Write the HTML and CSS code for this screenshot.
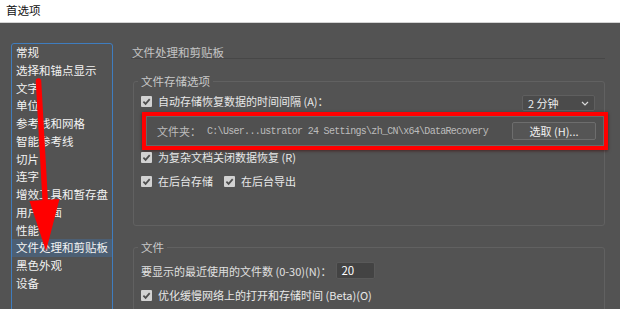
FILE: index.html
```html
<!DOCTYPE html>
<html lang="zh-CN">
<head>
<meta charset="utf-8">
<title>首选项</title>
<link rel="stylesheet" href="styles.css">
</head>
<body>
<header class="titlebar">首选项</header>
<div class="main">
  <ul class="sidebar">
    <li>常规</li>
    <li>选择和锚点显示</li>
    <li>文字</li>
    <li>单位</li>
    <li>参考线和网格</li>
    <li>智能参考线</li>
    <li>切片</li>
    <li>连字</li>
    <li>增效工具和暂存盘</li>
    <li>用户界面</li>
    <li>性能</li>
    <li class="selected">文件处理和剪贴板</li>
    <li>黑色外观</li>
    <li>设备</li>
  </ul>
  <section class="content">
    <h1 class="heading">文件处理和剪贴板</h1>
    <fieldset class="group group-save">
      <legend>文件存储选项</legend>
      <div class="row row-autosave">
        <span class="check"><span class="box"><svg viewBox="0 0 11 11" width="11" height="11"><path d="M2.4 5.6 L4.6 7.9 L8.7 3.1" fill="none" stroke="#4e4e4e" stroke-width="1.7"/></svg></span>自动存储恢复数据的时间间隔 (A)：</span>
        <div class="select"><span>2 分钟</span><svg viewBox="0 0 8 5" width="8" height="5"><path d="M1 1 L4 4 L7 1" fill="none" stroke="#d8d8d8" stroke-width="1.2"/></svg></div>
      </div>
      <div class="highlight">
        <div class="folder">
          <span class="folder-label">文件夹：</span>
          <span class="path">C:\User...ustrator 24 Settings\zh_CN\x64\DataRecovery</span>
          <button class="btn">选取 (H)...</button>
        </div>
      </div>
      <div class="row row-nodata">
        <span class="check"><span class="box"><svg viewBox="0 0 11 11" width="11" height="11"><path d="M2.4 5.6 L4.6 7.9 L8.7 3.1" fill="none" stroke="#4e4e4e" stroke-width="1.7"/></svg></span>为复杂文档关闭数据恢复 (R)</span>
      </div>
      <div class="row row-bg">
        <span class="check"><span class="box"><svg viewBox="0 0 11 11" width="11" height="11"><path d="M2.4 5.6 L4.6 7.9 L8.7 3.1" fill="none" stroke="#4e4e4e" stroke-width="1.7"/></svg></span>在后台存储</span>
        <span class="check"><span class="box"><svg viewBox="0 0 11 11" width="11" height="11"><path d="M2.4 5.6 L4.6 7.9 L8.7 3.1" fill="none" stroke="#4e4e4e" stroke-width="1.7"/></svg></span>在后台导出</span>
      </div>
    </fieldset>
    <fieldset class="group group-files">
      <legend>文件</legend>
      <div class="row row-recent">
        <span class="label">要显示的最近使用的文件数 (0-30)(N)：</span>
        <span class="input">20</span>
      </div>
      <div class="row row-opt">
        <span class="check"><span class="box"><svg viewBox="0 0 11 11" width="11" height="11"><path d="M2.4 5.6 L4.6 7.9 L8.7 3.1" fill="none" stroke="#4e4e4e" stroke-width="1.7"/></svg></span>优化缓慢网络上的打开和存储时间 (Beta)(O)</span>
      </div>
    </fieldset>
  </section>
</div>
<svg class="annotation" viewBox="0 0 620 309" width="620" height="309">
  <line x1="38.5" y1="81" x2="45.5" y2="206" stroke="#ff0000" stroke-width="5.5" stroke-linecap="round"/>
  <polygon points="29.5,201 59.5,199 46,251" fill="#ff0000"/>
</svg>
</body>
</html>
```
FILE: styles.css
```css
* { box-sizing: border-box; }
html, body { margin: 0; padding: 0; }
body {
  width: 620px;
  height: 309px;
  overflow: hidden;
  position: relative;
  background: #535353;
  font-family: "Noto Sans CJK SC", "Noto Sans", sans-serif;
}
.titlebar {
  height: 23px;
  background: #ffffff;
  border-bottom: 1px solid #d4d4d4;
  color: #111111;
  font-size: 11.5px;
  line-height: 21px;
  padding-left: 6px;
}
.main {
  display: flex;
  align-items: flex-start;
  padding: 20px 0 0 11px;
}
.sidebar {
  list-style: none;
  margin: 0;
  padding: 0;
  width: 102px;
  height: 290px;
  flex: none;
  border: 1px solid #3f7dbf;
  border-radius: 3px;
  color: #f2f2f2;
  font-size: 11.5px;
  line-height: 17.75px;
}
.sidebar li {
  padding-left: 4px;
  white-space: nowrap;
}
.sidebar li.selected {
  background: #4c5f74;
}
.content {
  margin-left: 18px;
  width: 474px;
  flex: none;
}
.heading {
  margin: 3px 0 0 0;
  padding-left: 1px;
  font-size: 11.5px;
  font-weight: normal;
  line-height: 12px;
  height: 13px;
  color: #c4c4c4;
  border-bottom: 1px solid #474747;
}
.group {
  margin: 15px 0 0 2px;
  padding: 0 9px 38px 7px;
  border: 1px solid #616161;
  border-radius: 3px;
  min-width: 0;
}
.group legend {
  padding: 0 3px;
  margin-left: -3px;
  font-size: 11.5px;
  line-height: 14px;
  color: #c8c8c8;
}
.group-files {
  margin-top: 14px;
  padding-bottom: 60px;
}
.row {
  display: flex;
  align-items: center;
  height: 12px;
  font-size: 11px;
  line-height: 12px;
  color: #e8e8e8;
  white-space: nowrap;
}
.check {
  display: flex;
  align-items: center;
}
.check + .check { margin-left: 11px; }
.box {
  width: 11px;
  height: 11px;
  margin-right: 6px;
  background: #d2d2d2;
  border-radius: 1px;
  display: block;
  flex: none;
}
.box svg { display: block; }
.row-autosave { margin-top: 7px; }
.select {
  margin-left: auto;
  align-self: flex-start;
  width: 73px;
  height: 16px;
  display: flex;
  align-items: center;
  justify-content: space-between;
  padding: 0 5px 0 5px;
  background: #4b4b4b;
  border: 1px solid #5f5f5f;
  border-radius: 2px;
  color: #f0f0f0;
  font-size: 11px;
}
.select svg { display: block; }
.highlight {
  margin: 5px -13px 0 1px;
  height: 38px;
  border: 4px solid #ff0000;
  box-shadow: 0 1px 3px rgba(60, 0, 0, 0.55);
}
.folder {
  height: 30px;
  display: flex;
  align-items: center;
  padding: 0 7px 0 10px;
  border: 1px solid #676767;
  background: #505050;
  font-size: 11px;
  color: #bdbdbd;
  white-space: nowrap;
}
.path {
  margin-left: 6px;
  font-family: "Liberation Mono", "DejaVu Sans Mono", monospace;
  font-size: 10px;
  letter-spacing: -0.7px;
  color: #bcbcbc;
}
.btn {
  margin-left: auto;
  width: 84px;
  height: 18px;
  padding: 0;
  background: #555555;
  border: 1px solid #6d6d6d;
  border-radius: 2px;
  color: #f0f0f0;
  font-family: inherit;
  font-size: 11px;
  line-height: 16px;
}
.row-nodata { margin-top: 1px; }
.row-bg { margin-top: 12px; }
.row-recent {
  margin-top: 8px;
  height: 17px;
}
.label { color: #e0e0e0; }
.input {
  margin-left: 5px;
  width: 39px;
  height: 17px;
  padding-left: 4px;
  background: #434343;
  border: 1px solid #595959;
  border-radius: 2px;
  color: #ffffff;
  font-size: 11.5px;
  line-height: 15px;
}
.row-opt { margin-top: 10px; }
.annotation {
  position: absolute;
  top: 0;
  left: 0;
  pointer-events: none;
}
```
